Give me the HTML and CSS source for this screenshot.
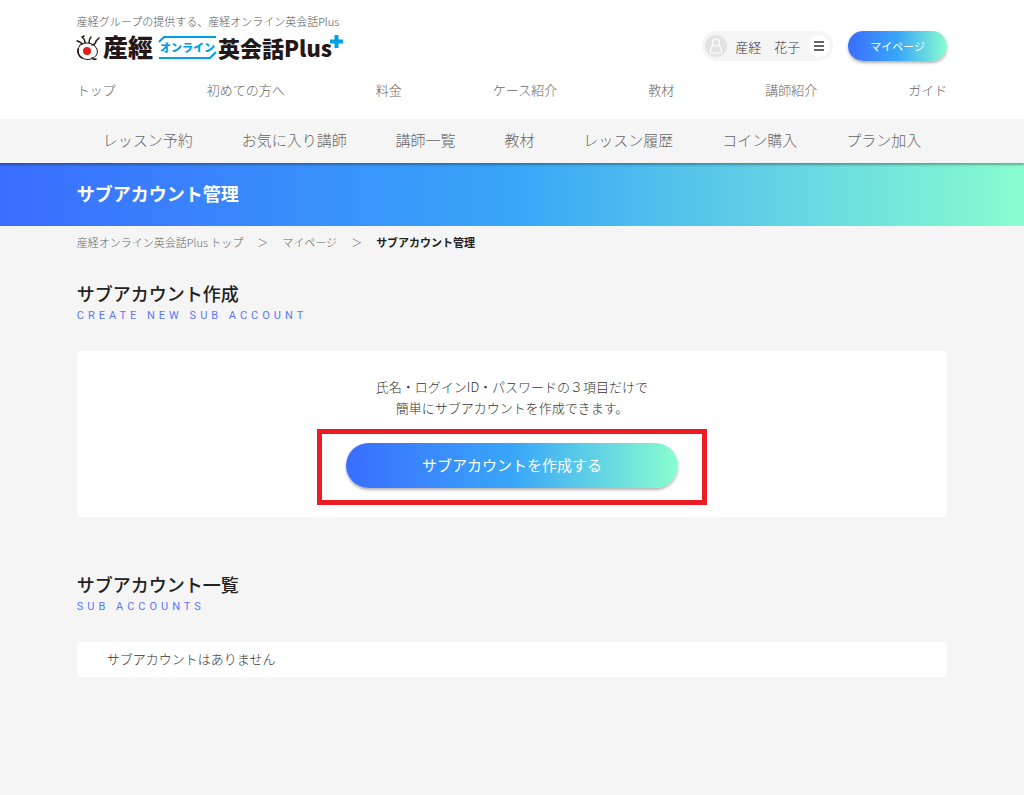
FILE: index.html
```html
<!DOCTYPE html>
<html lang="ja">
<head>
<meta charset="utf-8">
<meta name="viewport" content="width=device-width, initial-scale=1">
<title>サブアカウント管理</title>
<link rel="stylesheet" href="styles.css">
</head>
<body>
<header class="header">
  <div class="container">
    <div class="header-top">
      <div class="brand">
        <p class="tagline">産経グループの提供する、産経オンライン英会話Plus</p>
        <a class="logo" href="#" aria-label="産經オンライン英会話Plus">
          <svg width="267" height="30" viewBox="0 0 267 30">
            <g fill="none" stroke="#231815" stroke-linecap="round">
              <path d="M3 11Q-1 17 3 22Q8 27 14 25Q22 22 20 15Q18 10 12 9Q7 8 3 11" stroke-width="1"/>
              <path d="M1 15Q0 21 5 24" stroke-width="1.600"/>
              <path d="M5 10Q4 8 0 7M8 9Q8 5 5 3M5 3L7 2M12 9Q12 5 14 3M15 11Q19 10 19 7L22 4" stroke-width="1.500"/>
              <path d="M15 24Q17 26 19 25" stroke-width="1.600"/>
            </g>
            <circle cx="10" cy="17" r="4" fill="#e01f19"/>
            <text class="logo-sankei" x="26" y="23">産經</text>
            <path d="M82 8L87 3H139M82 24H133L139 18" fill="none" stroke="#00a0e9" stroke-width="2"/>
            <text class="logo-online" x="83" y="18">オンライン</text>
            <text class="logo-name" x="141" y="23">英会話</text>
            <text class="logo-plus" x="207" y="23">Plus</text>
            <path d="M259.500 1V14M253 7.500H266" stroke="#00a0e9" stroke-width="4"/>
          </svg>
        </a>
      </div>
      <div class="account">
        <button class="user" type="button">
          <svg class="avatar" width="22" height="22" viewBox="0 0 22 22">
            <circle cx="11" cy="11" r="11" fill="#e3e3e3"/>
            <g fill="none" stroke="#fff" stroke-width="1.200"><circle cx="11" cy="7.500" r="3.500"/><path d="M8.500 10.500Q5.500 12 5.500 15V18H16.500V15Q16.500 12 13.500 10.500"/></g>
          </svg>
          <span>産経　花子</span>
          <svg width="22" height="22" viewBox="0 0 22 22">
            <circle cx="11" cy="11" r="11" fill="#fff"/>
            <path d="M6 7H16M6 11H16M6 15H16" stroke="#333" stroke-width="1.600"/>
          </svg>
        </button>
        <a class="mypage" href="#">マイページ</a>
      </div>
    </div>
    <nav class="main-nav">
      <a href="#">トップ</a><a href="#">初めての方へ</a><a href="#">料金</a><a href="#">ケース紹介</a><a href="#">教材</a><a href="#">講師紹介</a><a href="#">ガイド</a>
    </nav>
  </div>
</header>
<div class="sub-bar">
  <nav class="container sub-nav">
    <a href="#">レッスン予約</a><a href="#">お気に入り講師</a><a href="#">講師一覧</a><a href="#">教材</a><a href="#">レッスン履歴</a><a href="#">コイン購入</a><a href="#">プラン加入</a>
  </nav>
</div>
<div class="hero"><h1 class="container">サブアカウント管理</h1></div>
<main class="container">
  <nav class="breadcrumb">
    <a href="#">産経オンライン英会話Plus トップ</a><span>＞</span><a href="#">マイページ</a><span>＞</span><strong>サブアカウント管理</strong>
  </nav>
  <section class="section">
    <h2>サブアカウント作成</h2>
    <p class="subtitle">CREATE NEW SUB ACCOUNT</p>
    <div class="card create">
      <p>氏名・ログインID・パスワードの３項目だけで<br>簡単にサブアカウントを作成できます。</p>
      <div class="highlight"><button class="create-button" type="button">サブアカウントを作成する</button></div>
    </div>
  </section>
  <section class="section">
    <h2>サブアカウント一覧</h2>
    <p class="subtitle">SUB ACCOUNTS</p>
    <div class="card empty">サブアカウントはありません</div>
  </section>
</main>
</body>
</html>
```
FILE: styles.css
```css
* { box-sizing: border-box; }
:root { --gradient: linear-gradient(90deg, #3a6dff, #38a6f8 50%, #89fdd0); }
body {
  margin: 0;
  background: #f5f5f5;
  color: #333;
  font-family: "Noto Sans CJK JP", sans-serif;
  font-size: 13px;
  font-weight: 300;
  line-height: 21px;
}
h1, h2, p { margin: 0; }
a { color: inherit; text-decoration: none; }
button { border: 0; font: inherit; cursor: pointer; }
svg { display: block; }
.container { width: 85%; margin-inline: auto; }
.header { background: #fff; }
.header-top { display: flex; justify-content: space-between; padding-top: 13px; }
.tagline { color: #555; font-size: 11px; line-height: 16px; }
.logo { display: block; margin-top: 5px; }
.logo svg { overflow: visible; }
.logo text { font-weight: 900; fill: #231815; }
.logo .logo-sankei { font-size: 25px; }
.logo .logo-online { font-size: 11px; fill: #00a0e9; }
.logo .logo-name { font-size: 22px; }
.logo .logo-plus { font-size: 22px; }
.account { display: flex; align-items: center; gap: 15px; padding-top: 15px; }
.user {
  display: flex;
  align-items: center;
  gap: 8px;
  height: 30px;
  padding: 0 3px;
  border-radius: 15px;
  background: #f5f5f5;
  color: #333;
}
.mypage {
  width: 99px;
  border-radius: 15px;
  background: var(--gradient);
  box-shadow: 0 2px 3px rgba(0, 0, 0, .3);
  color: #fff;
  font-size: 11px;
  font-weight: 400;
  line-height: 30px;
  text-align: center;
}
.main-nav {
  display: flex;
  justify-content: space-between;
  padding: 15px 0 19px;
  color: #666;
}
.sub-bar {
  position: relative;
  box-shadow: 0 2px 2px rgba(0, 0, 0, .3);
  background: #f5f5f5;
}
.sub-nav {
  display: flex;
  justify-content: space-between;
  padding: 0 26px 2px;
  color: #666;
  font-size: 15px;
  line-height: 42px;
}
.hero { background: var(--gradient); color: #fff; }
.hero h1 { padding-bottom: 2px; font-size: 18px; font-weight: 700; line-height: 61px; }
.breadcrumb {
  display: flex;
  gap: 14px;
  color: #666;
  font-size: 11px;
  line-height: 32px;
}
.breadcrumb strong { color: #222; font-weight: 700; }
.section { padding-top: 22px; }
.section + .section { padding-top: 54px; }
h2 { color: #222; font-size: 18px; font-weight: 500; line-height: 27px; }
.subtitle {
  margin-bottom: 26px;
  color: #5b75ff;
  font-family: Roboto, sans-serif;
  font-size: 11px;
  font-weight: 400;
  letter-spacing: 4px;
  line-height: 18px;
}
.card { border-radius: 5px; background: #fff; }
.create {
  display: flex;
  flex-direction: column;
  align-items: center;
  gap: 11px;
  padding: 25px 16px 12px;
  text-align: center;
}
.highlight { border: 5px solid #ed1c24; padding: 9px 24px 12px; }
.create-button {
  width: 332px;
  max-width: 100%;
  height: 45px;
  padding: 0 0 2px;
  border-radius: 23px;
  background: var(--gradient);
  box-shadow: 0 2px 3px rgba(0, 0, 0, .3);
  color: #fff;
  font-size: 15px;
  font-weight: 400;
}
.empty { padding: 6px 30px 8px; }
```
